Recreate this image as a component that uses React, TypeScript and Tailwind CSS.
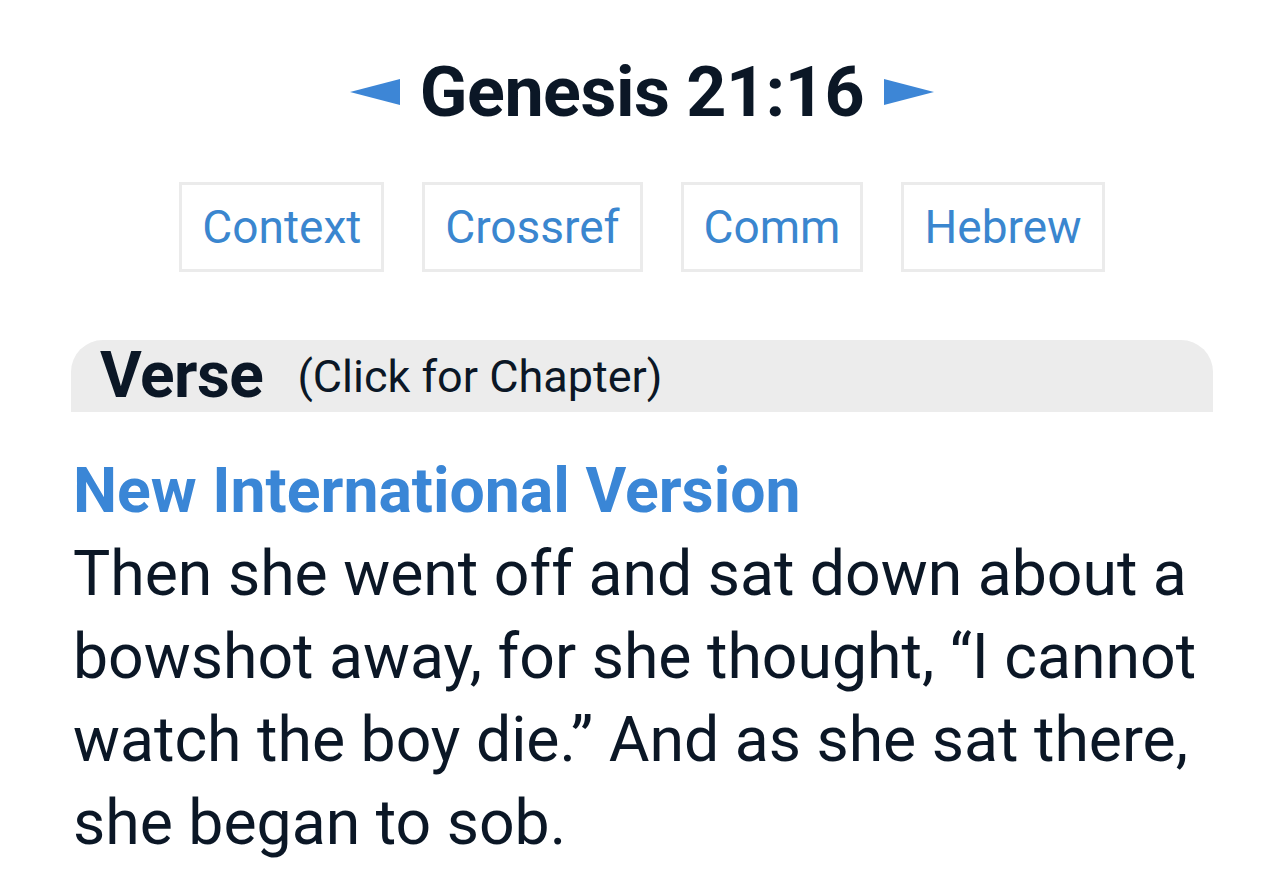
const tabs = ["Context", "Crossref", "Comm", "Hebrew"];

function Arrow({ dir }: { dir: "left" | "right" }) {
  return (
    <svg width="50" height="26" viewBox="0 0 50 26" className="shrink-0">
      {dir === "left" ? (
        <polygon points="0,13 50,0 50,26" fill="#3d86d6" />
      ) : (
        <polygon points="50,13 0,0 0,26" fill="#3d86d6" />
      )}
    </svg>
  );
}

export default function App() {
  return (
    <div className="min-h-screen bg-white font-['Roboto',sans-serif] text-[#0b1726]">
      <div className="px-[71px] pt-[52px]">
        {/* title */}
        <div className="flex items-center justify-center gap-[20px] h-[80px]">
          <Arrow dir="left" />
          <h1 className="text-[70px] font-bold leading-none tracking-[-0.5px]">Genesis 21:16</h1>
          <Arrow dir="right" />
        </div>

        {/* tabs */}
        <div className="mt-[50px] flex justify-center gap-[38px]">
          {tabs.map((t) => (
            <a
              key={t}
              className="h-[90px] px-[20px] flex items-center border-[3px] border-[#ebebeb] text-[46px] text-[#3a86cf] leading-none"
            >
              {t}
            </a>
          ))}
        </div>

        {/* verse bar */}
        <div className="mt-[68px] h-[72px] rounded-t-[32px] bg-[#ececec] flex items-center pl-[29px] gap-[34px]">
          <span className="text-[64px] font-bold leading-none tracking-[-0.5px]">Verse</span>
          <span className="text-[45px] leading-none">(Click for Chapter)</span>
        </div>

        {/* version */}
        <div className="mt-[48px] pl-[2px]">
          <h2 className="text-[62.5px] font-bold text-[#3a86d6] leading-none">New International Version</h2>
          <p className="mt-[9px] text-[62.5px] leading-[83px]">
            Then she went off and sat down about a bowshot away, for she thought, “I cannot watch the boy die.” And as she sat there, she began to sob.
          </p>
        </div>
      </div>
    </div>
  );
}
